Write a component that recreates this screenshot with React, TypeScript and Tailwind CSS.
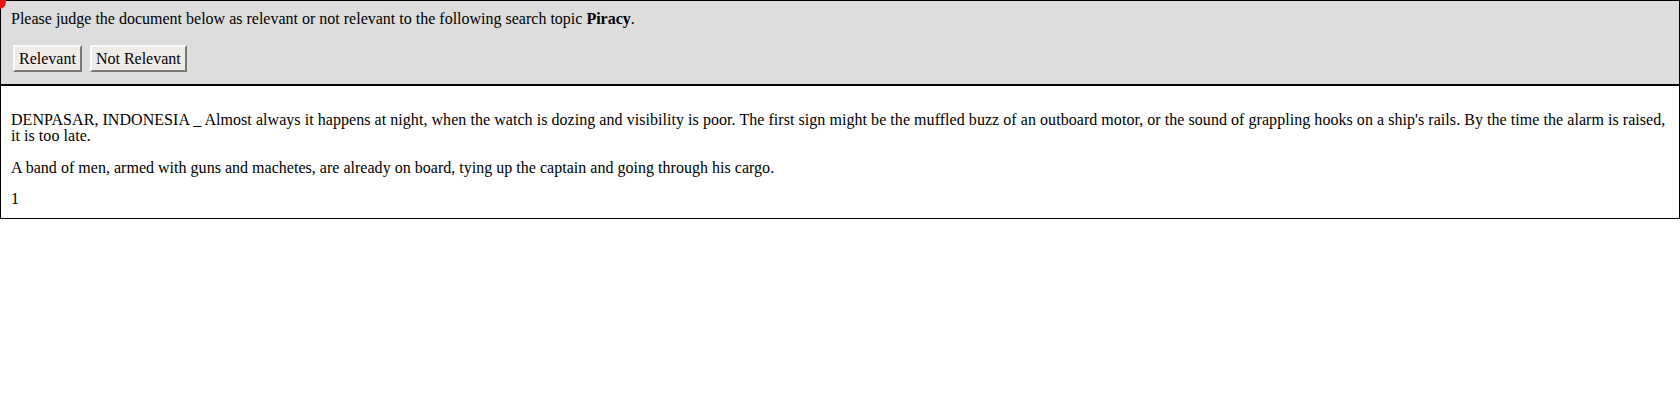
import { type FC } from "react";

const buttonClass =
  "m-[2px] h-[27px] px-[4px] bg-[#efece7] text-black text-[16px] leading-[16px] border-2 border-t-[#fafafa] border-l-[#fafafa] border-b-[#777777] border-r-[#777777] cursor-pointer";

const App: FC = () => {
  return (
    <div className="relative w-[1680px] font-['Liberation_Serif','Times_New_Roman',serif] text-[16px] leading-[16px] text-black bg-white">
      {/* red marker in the corner */}
      <div className="absolute left-[-8px] top-[-5px] w-[14px] h-[14px] rounded-full bg-[#ee1111] z-10" />

      {/* Judgement bar */}
      <div className="bg-[#dddddd] border border-black px-[10px] pt-[10px] pb-[10px]">
        <p className="mb-[16px]">
          Please judge the document below as relevant or not relevant to the
          following search topic <b>Piracy</b>.
        </p>
        <div className="flex">
          <button className={buttonClass}>Relevant</button>
          <span className="w-[4px]" />
          <button className={buttonClass}>Not Relevant</button>
        </div>
      </div>

      {/* Document */}
      <div className="border border-black px-[10px] pt-[10px] pb-[11px]">
        <p className="my-[16px] tracking-[0.05px]">
          DENPASAR, INDONESIA _ Almost always it happens at night, when the
          watch is dozing and visibility is poor. The first sign might be the
          muffled buzz of an outboard motor, or the sound of grappling hooks on
          a ship's rails. By the time the alarm is raised, it is too late.
        </p>
        <p className="mb-[15px] tracking-[0.02px]">
          A band of men, armed with guns and machetes, are already on board,
          tying up the captain and going through his cargo.
        </p>
        <div>1</div>
      </div>
    </div>
  );
};

export default App;
